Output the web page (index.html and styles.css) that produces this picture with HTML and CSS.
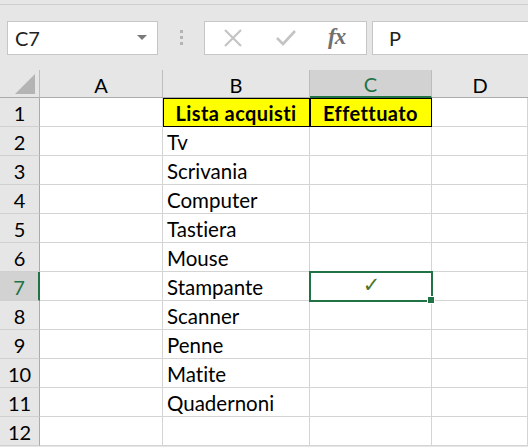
FILE: index.html
```html
<!DOCTYPE html>
<html>
<head>
<meta charset="utf-8">
<link rel="stylesheet" href="styles.css">
</head>
<body>
<div class="app">
  <div class="topline"></div>
  <div class="formula-row">
    <div class="namebox">
      <span class="name">C7</span>
      <svg class="dd" width="10" height="6" viewBox="0 0 10 6"><path d="M0 0 L10 0 L5 5 Z" fill="#7a7a7a"/></svg>
    </div>
    <div class="dots"><i></i><i></i><i></i></div>
    <div class="fbtns">
      <svg class="bx" width="18" height="18" viewBox="0 0 18 18"><path d="M1 1 L17 17 M17 1 L1 17" stroke="#c4c4c4" stroke-width="2.2"/></svg>
      <svg class="bc" width="20" height="16" viewBox="0 0 20 16"><path d="M1 8 L7 14 L19 1" stroke="#c4c4c4" stroke-width="2.6" fill="none"/></svg>
      <span class="fx">fx</span>
    </div>
    <div class="finput">P</div>
  </div>
  <div class="sheet">
    <div class="corner"><div class="tri"></div></div>
    <div class="ch">A</div>
    <div class="ch">B</div>
    <div class="ch sel">C</div>
    <div class="ch last">D</div>

    <div class="rh">1</div><div class="c"></div><div class="c hdr">Lista acquisti</div><div class="c hdr">Effettuato</div><div class="c"></div>
    <div class="rh">2</div><div class="c"></div><div class="c">Tv</div><div class="c"></div><div class="c"></div>
    <div class="rh">3</div><div class="c"></div><div class="c">Scrivania</div><div class="c"></div><div class="c"></div>
    <div class="rh">4</div><div class="c"></div><div class="c">Computer</div><div class="c"></div><div class="c"></div>
    <div class="rh">5</div><div class="c"></div><div class="c">Tastiera</div><div class="c"></div><div class="c"></div>
    <div class="rh">6</div><div class="c"></div><div class="c">Mouse</div><div class="c"></div><div class="c"></div>
    <div class="rh rsel">7</div><div class="c"></div><div class="c">Stampante</div><div class="c active"><span class="check">✓</span><span class="handle"></span></div><div class="c"></div>
    <div class="rh">8</div><div class="c"></div><div class="c">Scanner</div><div class="c"></div><div class="c"></div>
    <div class="rh">9</div><div class="c"></div><div class="c">Penne</div><div class="c"></div><div class="c"></div>
    <div class="rh">10</div><div class="c"></div><div class="c">Matite</div><div class="c"></div><div class="c"></div>
    <div class="rh">11</div><div class="c"></div><div class="c">Quadernoni</div><div class="c"></div><div class="c"></div>
    <div class="rh">12</div><div class="c"></div><div class="c"></div><div class="c"></div><div class="c"></div>
  </div>
</div>
</body>
</html>
```

FILE: styles.css
```css
html, body {
  margin: 0;
  padding: 0;
  background: #e6e6e6;
  overflow: hidden;
}
.app {
  width: 528px;
  height: 447px;
  font-family: Lato, "Liberation Sans", sans-serif;
  font-variant-ligatures: none;
  color: #000;
}
.topline {
  height: 4px;
  border-bottom: 1px solid #cfcfcf;
}
.formula-row {
  display: flex;
  align-items: center;
  height: 65px;
  padding-left: 7px;
  box-sizing: border-box;
}
.namebox {
  width: 151px;
  height: 34px;
  box-sizing: border-box;
  background: #fff;
  border: 1px solid #c6c6c6;
  display: flex;
  align-items: center;
  justify-content: space-between;
  padding: 0 10px 0 7px;
  margin-top: 1px;
}
.name {
  font-size: 20px;
  color: #222;
}
.dots {
  width: 46px;
  display: flex;
  flex-direction: column;
  align-items: center;
  gap: 3px;
}
.dots i {
  display: block;
  width: 3px;
  height: 3px;
  background: #b4b4b4;
}
.fbtns {
  width: 163px;
  height: 34px;
  box-sizing: border-box;
  background: #fff;
  border: 1px solid #c6c6c6;
  display: flex;
  align-items: center;
  padding-left: 19px;
  margin-top: 1px;
}
.bc { margin-left: 34px; }
.fx {
  margin-left: 32px;
  font-family: "Liberation Serif", serif;
  font-style: italic;
  font-weight: bold;
  font-size: 23px;
  color: #707070;
  letter-spacing: -1px;
  margin-top: -2px;
}
.finput {
  flex: 1;
  height: 34px;
  box-sizing: border-box;
  background: #fff;
  border: 1px solid #c6c6c6;
  border-right: none;
  margin-left: 5px;
  margin-top: 1px;
  padding-left: 16px;
  display: flex;
  align-items: center;
  font-size: 20px;
  color: #222;
}
.sheet {
  display: grid;
  grid-template-columns: 40px 123px 147px 122px 96px;
  grid-template-rows: 28px repeat(12, 29px);
  background: #fff;
}
.corner {
  background: #e6e6e6;
  border-right: 1px solid #bdbdbd;
  border-bottom: 1px solid #ababab;
  box-sizing: border-box;
  display: flex;
  justify-content: flex-end;
  align-items: flex-end;
  padding: 0 4px 3px 0;
}
.tri {
  width: 0;
  height: 0;
  border-left: 20px solid transparent;
  border-bottom: 20px solid #b4b4b4;
}
.ch {
  background: #e6e6e6;
  border-right: 1px solid #bdbdbd;
  border-bottom: 1px solid #ababab;
  box-sizing: border-box;
  display: flex;
  align-items: center;
  justify-content: center;
  font-size: 20px;
  padding-top: 2px;
}
.ch.last { border-right: none; }
.ch.sel {
  background: #d2d2d2;
  color: #217346;
  border-bottom: 2px solid #217346;
}
.rh {
  background: #e6e6e6;
  border-right: 1px solid #ababab;
  border-bottom: 1px solid #d0d0d0;
  box-sizing: border-box;
  display: flex;
  align-items: center;
  justify-content: center;
  font-size: 20px;
  padding-top: 1px;
}
.rh.rsel {
  background: #d2d2d2;
  color: #217346;
  border-right: 2px solid #217346;
}
.c {
  border-right: 1px solid #d4d4d4;
  border-bottom: 1px solid #d4d4d4;
  box-sizing: border-box;
  font-size: 20.5px;
  display: flex;
  align-items: center;
  padding-left: 4px;
  padding-top: 1px;
  white-space: nowrap;
}
.c.hdr {
  background: #ffff00;
  font-weight: bold;
  font-size: 20px;
  letter-spacing: 0.4px;
  justify-content: center;
  padding-left: 0;
  outline: 1px solid #000;
  outline-offset: -1px;
}
.c.active {
  position: relative;
  justify-content: center;
  padding-left: 0;
  outline: 2px solid #217346;
  outline-offset: -1px;
}
.check {
  font-family: "DejaVu Sans", sans-serif;
  font-size: 21px;
  font-weight: bold;
  color: #4f7424;
  margin-left: 2px;
  margin-top: -3px;
}
.handle {
  position: absolute;
  right: -4px;
  bottom: -4px;
  width: 6px;
  height: 6px;
  background: #217346;
  border: 1px solid #fff;
}
```
